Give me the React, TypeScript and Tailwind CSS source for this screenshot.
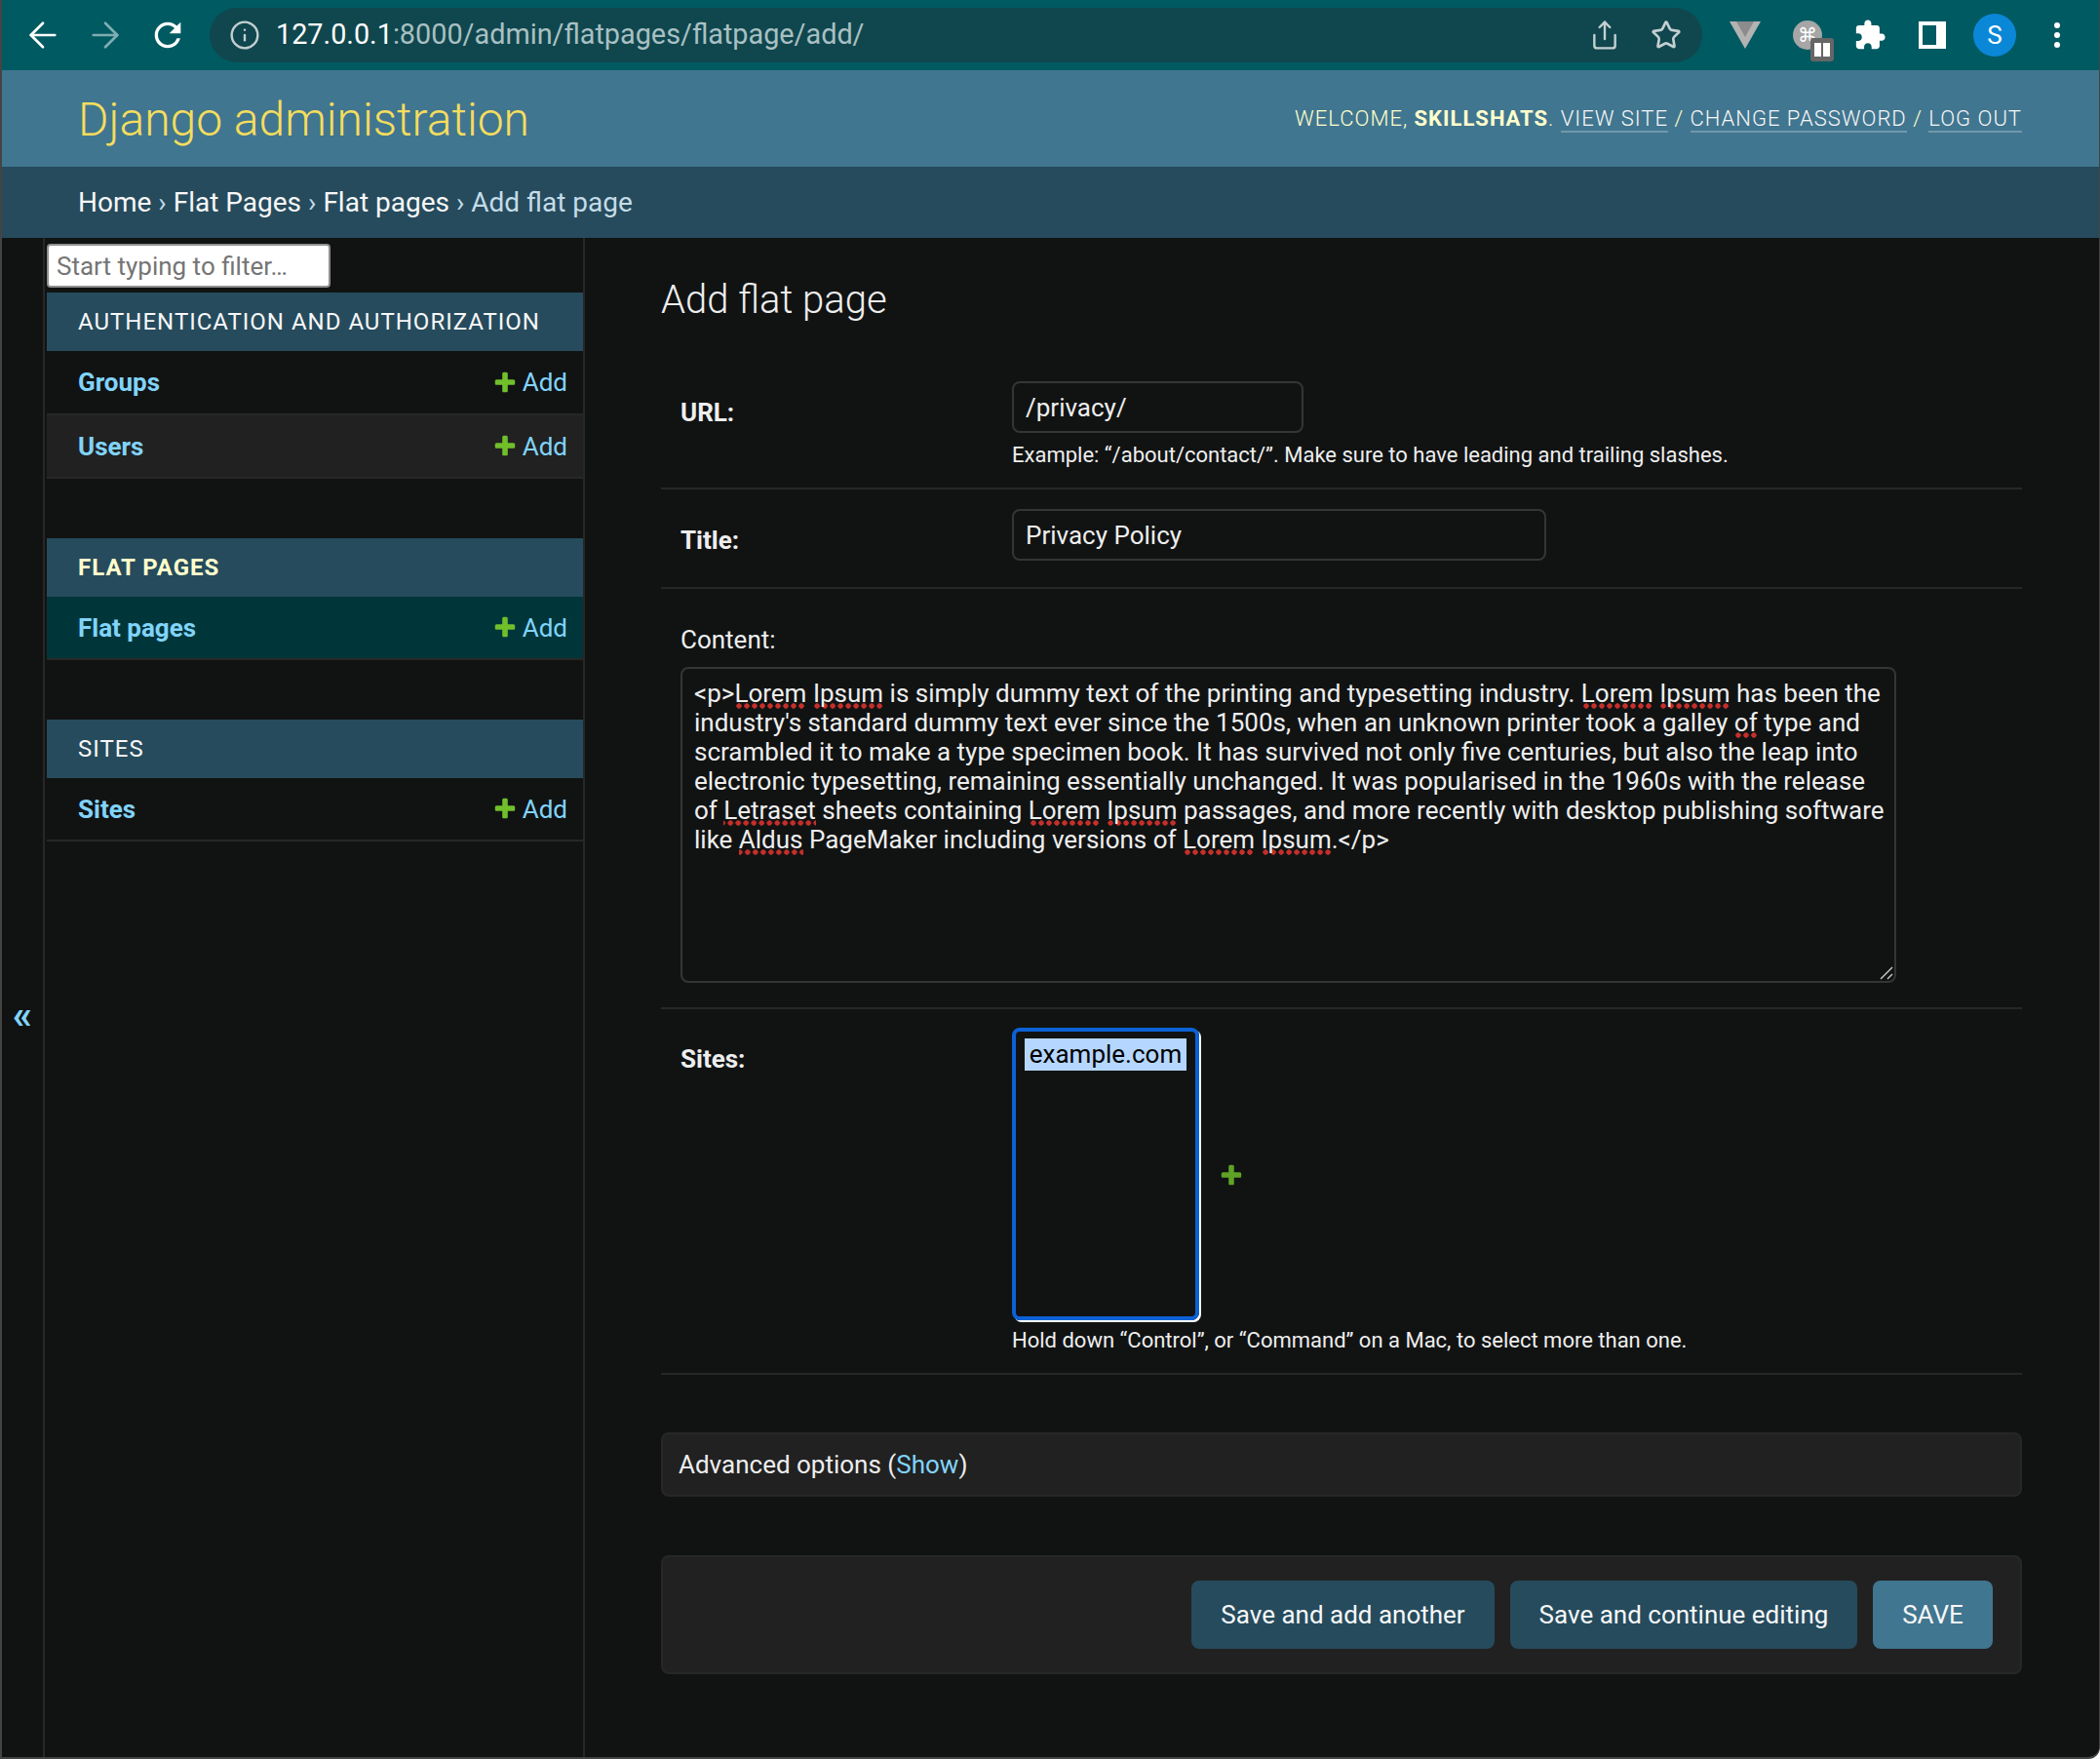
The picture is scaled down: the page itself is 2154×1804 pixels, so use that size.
import { ArrowLeft, ArrowRight, Info, Share, Star } from 'lucide-react';

const PLUS_PATH =
  'M1600 736v192q0 40-28 68t-68 28h-416v416q0 40-28 68t-68 28h-192q-40 0-68-28t-28-68v-416h-416q-40 0-68-28t-28-68v-192q0-40 28-68t68-28h416v-416q0-40 28-68t68-28h192q40 0 68 28t28 68v416h416q40 0 68 28t28 68z';

const sections = [
  { caption: 'Authentication and Authorization', active: false, rows: ['Groups', 'Users'] },
  { caption: 'Flat Pages', active: true, rows: ['Flat pages'] },
  { caption: 'Sites', active: false, rows: ['Sites'] },
];

const PlusIcon = ({ className }: { className: string }) => (
  <svg viewBox="0 0 1792 1792" className={className} fill="currentColor">
    <path d={PLUS_PATH} />
  </svg>
);

// spell checker squiggle under a word of the content box
const Misspelt = ({ children }: { children: string }) => (
  <span className="bg-[radial-gradient(circle,#c62f2a_2.4px,transparent_3px)] bg-[length:8px_6px] bg-bottom bg-repeat-x pb-[1px]">{children}</span>
);

const BrowserBar = () => (
  <div className="flex h-[72px] items-center bg-[#005a62] pl-[30px] text-white">
    <ArrowLeft className="-ml-[9px] h-[42px] w-[42px]" strokeWidth={1.55} />
    <ArrowRight className="ml-[22px] h-[42px] w-[42px] text-[#7fadb1]" strokeWidth={1.55} />
    <svg viewBox="0 0 24 24" className="ml-[23px] h-[40px] w-[40px]" fill="#ffffff">
      <path d="M17.65 6.35A7.958 7.958 0 0 0 12 4c-4.42 0-7.99 3.58-7.99 8s3.57 8 7.99 8c3.73 0 6.84-2.55 7.73-6h-2.08A5.99 5.99 0 0 1 12 18c-3.31 0-6-2.69-6-6s2.69-6 6-6c1.66 0 3.14.69 4.22 1.78L13 11h7V4l-2.35 2.35z" />
    </svg>
    <div className="ml-[23px] flex h-[56px] w-[1531px] items-center rounded-full bg-[#10474e] pl-[20px]">
      <Info className="h-[32px] w-[32px] text-[#c3cfd1]" strokeWidth={1.8} />
      <div className="ml-[16px] text-[28.8px] text-[#a9c0c3]">
        <span className="text-white">127.0.0.1</span>:8000/admin/flatpages/flatpage/add/
      </div>
      <Share className="ml-[743px] h-[32px] w-[32px] text-[#c3cfd1]" strokeWidth={1.8} />
      <Star className="ml-[31px] h-[32px] w-[32px] text-[#c3cfd1]" strokeWidth={2} />
    </div>
    <svg viewBox="0 0 32 28" className="ml-[28px] h-[28px] w-[32px]">
      <polygon points="0,0 32,0 16,28" fill="#b3b3b3" />
      <polygon points="7,0 25,0 16,16" fill="#8c8c8c" />
    </svg>
    <div className="relative ml-[33px] flex h-[30px] w-[30px] items-center justify-center rounded-full bg-[#a6a6a6] text-[20px] text-white font-['DejaVu_Sans',sans-serif]">
      ⌘
      <div className="absolute left-[18px] top-[18px] flex h-[24px] w-[24px] items-center justify-center gap-[2px] rounded-[3px] bg-[#666666]">
        <div className="h-[14px] w-[7px] bg-white" />
        <div className="h-[14px] w-[7px] bg-white" />
      </div>
    </div>
    <svg viewBox="0 0 24 24" className="ml-[32px] h-[34px] w-[34px]" fill="#ffffff">
      <path d="M20.5 11H19V7c0-1.1-.9-2-2-2h-4V3.5C13 2.12 11.88 1 10.5 1S8 2.12 8 3.5V5H4c-1.1 0-1.99.9-1.99 2v3.8H3.5c1.49 0 2.7 1.21 2.7 2.7s-1.21 2.7-2.7 2.7H2V20c0 1.1.9 2 2 2h3.8v-1.5c0-1.49 1.21-2.7 2.7-2.7 1.49 0 2.7 1.21 2.7 2.7V22H17c1.1 0 2-.9 2-2v-4h1.5c1.38 0 2.5-1.12 2.5-2.5S21.88 11 20.5 11z" />
    </svg>
    <div className="ml-[33px] h-[28px] w-[28px] border-[4px] border-r-[10px] border-white" />
    <div className="ml-[28px] flex h-[44px] w-[44px] items-center justify-center rounded-full bg-[#0b87d7] text-[26px]">S</div>
    <div className="ml-[39px] flex flex-col gap-[4px]">
      <div className="h-[6px] w-[6px] rounded-full bg-white" />
      <div className="h-[6px] w-[6px] rounded-full bg-white" />
      <div className="h-[6px] w-[6px] rounded-full bg-white" />
    </div>
  </div>
);

const Sidebar = () => (
  <div className="ml-[2px] w-[552px] border-r-2 border-[#272727] pt-[6px]">
    <input
      readOnly
      placeholder="Start typing to filter…"
      className="block h-[45px] w-[291px] rounded-[4px] border-2 border-[#8f8f8f] bg-white px-[8px] text-[26px] text-[#333] placeholder:text-[#757575] outline-none"
    />
    <div className="mt-[5px]">
      {sections.map((section) => (
        <div key={section.caption} className="mb-[60.5px]">
          <div
            className={`flex h-[60px] items-center bg-[#264b5d] pl-[32px] text-[24px] uppercase tracking-[1px] ${
              section.active ? 'font-bold text-[#ffffcc]' : 'text-[#f7f7f7]'
            }`}
          >
            {section.caption}
          </div>
          {section.rows.map((row) => (
            <div
              key={row}
              className={`flex h-[65.5px] items-center justify-between border-b-2 border-[#272727] pl-[32px] pr-[16px] pt-[2px] text-[26px] text-[#81d4fa] ${
                section.active ? 'bg-[#00363a]' : row === 'Users' ? 'bg-[#212121]' : ''
              }`}
            >
              <span className="font-bold">{row}</span>
              <span className="flex items-center gap-[5px]">
                <PlusIcon className="h-[26px] w-[26px] text-[#70bf2b]" />
                Add
              </span>
            </div>
          ))}
        </div>
      ))}
    </div>
  </div>
);

const ContentBox = () => (
  <div className="relative mt-[13px] h-[324px] w-[1247px] rounded-[8px] border-2 border-[#353535] px-[12px] pt-[10px] text-[26px] leading-[30px] text-[#eeeeee]">
    <div className="whitespace-nowrap">
      &lt;p&gt;<Misspelt>Lorem</Misspelt> <Misspelt>Ipsum</Misspelt> is simply dummy text of the printing and typesetting industry. <Misspelt>Lorem</Misspelt> <Misspelt>Ipsum</Misspelt> has been the
    </div>
    <div className="whitespace-nowrap">
      industry's standard dummy text ever since the 1500s, when an unknown printer took a galley <Misspelt>of</Misspelt> type and
    </div>
    <div className="whitespace-nowrap">
      scrambled it to make a type specimen book. It has survived not only five centuries, but also the leap into
    </div>
    <div className="whitespace-nowrap">
      electronic typesetting, remaining essentially unchanged. It was popularised in the 1960s with the release
    </div>
    <div className="whitespace-nowrap">
      of <Misspelt>Letraset</Misspelt> sheets containing <Misspelt>Lorem</Misspelt> <Misspelt>Ipsum</Misspelt> passages, and more recently with desktop publishing software
    </div>
    <div className="whitespace-nowrap">
      like <Misspelt>Aldus</Misspelt> PageMaker including versions of <Misspelt>Lorem</Misspelt> <Misspelt>Ipsum</Misspelt>.&lt;/p&gt;
    </div>
    <svg viewBox="0 0 14 14" className="absolute bottom-[1px] right-[1px] h-[14px] w-[14px]" stroke="#c8c8c8" strokeWidth="1.4">
      <line x1="1" y1="13" x2="13" y2="1" />
      <line x1="8" y1="13" x2="13" y2="8" />
    </svg>
  </div>
);

const MainForm = () => (
  <div className="flex-1 pl-[78px] pr-[79px] pt-[40px] text-[#eeeeee]">
    <h1 className="mb-[39px] text-[40px] font-light leading-[48px] text-[#eeeeee]">Add flat page</h1>

    {/* URL */}
    <div className="flex border-b-2 border-[#272727] px-[20px] pb-[18px] pt-[20px]">
      <label className="w-[340px] shrink-0 pt-[17px] text-[26px] font-bold leading-[30px]">URL:</label>
      <div>
        <input
          readOnly
          value="/privacy/"
          className="block h-[53px] w-[299px] rounded-[8px] border-2 border-[#353535] bg-transparent px-[12px] text-[26px] text-[#eeeeee] outline-none"
        />
        <div className="mt-[8px] text-[22px] leading-[30px]">
          Example: “/about/contact/”. Make sure to have leading and trailing slashes.
        </div>
      </div>
    </div>

    {/* Title */}
    <div className="flex border-b-2 border-[#272727] px-[20px] py-[20px] pb-[27px]">
      <label className="w-[340px] shrink-0 pt-[17px] text-[26px] font-bold leading-[30px]">Title:</label>
      <input
        readOnly
        value="Privacy Policy"
        className="block h-[53px] w-[548px] rounded-[8px] border-2 border-[#353535] bg-transparent px-[12px] text-[26px] text-[#eeeeee] outline-none"
      />
    </div>

    {/* Content */}
    <div className="border-b-2 border-[#272727] px-[20px] pb-[25px] pt-[37px]">
      <label className="block text-[26px] leading-[30px]">Content:</label>
      <ContentBox />
    </div>

    {/* Sites */}
    <div className="flex border-b-2 border-[#272727] px-[20px] pb-[18px] pt-[19px]">
      <label className="w-[340px] shrink-0 pt-[17px] text-[26px] font-bold leading-[30px]">Sites:</label>
      <div>
        <div className="flex items-center">
          <div className="h-[300px] w-[192px] rounded-[8px] border-[4px] border-[#0b62d6] px-[9px] pt-[7px] shadow-[2px_2px_0_0_#ffffff]">
            <div className="flex h-[33px] items-center justify-center bg-[#b5d7ff] text-[26px] text-black">example.com</div>
          </div>
          <PlusIcon className="ml-[20px] mt-[4px] h-[26px] w-[26px] text-[#5fa225]" />
        </div>
        <div className="mt-[6px] text-[22px] leading-[30px]">
          Hold down “Control”, or “Command” on a Mac, to select more than one.
        </div>
      </div>
    </div>

    {/* Advanced options */}
    <div className="mt-[59px] flex h-[66px] items-center rounded-[8px] border-2 border-[#272727] bg-[#212121] pl-[16px] text-[26px]">
      Advanced options (<span className="text-[#81d4fa]">Show</span>)
    </div>

    {/* Submit row */}
    <div className="mt-[60px] flex h-[122px] items-center justify-end gap-[16px] rounded-[8px] border-2 border-[#272727] bg-[#212121] pr-[28px] text-[26px] text-[#f7f7f7]">
      <button className="h-[70px] w-[311px] rounded-[8px] bg-[#264b5d]">Save and add another</button>
      <button className="h-[70px] w-[356px] rounded-[8px] bg-[#264b5d]">Save and continue editing</button>
      <button className="h-[70px] w-[123px] rounded-[8px] bg-[#417690]">SAVE</button>
    </div>
  </div>
);

const App = () => (
  <div className="flex h-[1804px] w-[2154px] flex-col overflow-hidden rounded-br-[12px] border-b-2 border-l-2 border-r border-[#444444] bg-[#111313] font-['Roboto',sans-serif]">
    <BrowserBar />

    {/* Site header */}
    <div className="flex h-[99px] items-center justify-between bg-[#417690] pl-[78px] pr-[79px]">
      <div className="pt-[2px] text-[48px] font-light text-[#f5dd5d]">Django administration</div>
      <div className="text-[22px] font-light uppercase tracking-[1px] text-[#ffffcc]">
        Welcome, <strong className="font-bold">skillshats</strong>.{' '}
        <span className="border-b-2 border-[#ffffff40] text-[#f7f7f7]">View site</span> /{' '}
        <span className="border-b-2 border-[#ffffff40] text-[#f7f7f7]">Change password</span> /{' '}
        <span className="border-b-2 border-[#ffffff40] text-[#f7f7f7]">Log out</span>
      </div>
    </div>

    {/* Breadcrumbs */}
    <div className="flex h-[73px] items-center bg-[#264b5d] pl-[78px] text-[28px] text-[#c4dce8]">
      <span className="text-[#f7f7f7]">Home</span>&nbsp;›&nbsp;
      <span className="text-[#f7f7f7]">Flat Pages</span>&nbsp;›&nbsp;
      <span className="text-[#f7f7f7]">Flat pages</span>&nbsp;›&nbsp;Add flat page
    </div>

    <div className="flex flex-1">
      <div className="flex w-[44px] shrink-0 items-center justify-center border-r-2 border-[#272727] pt-[38px] text-[40px] font-bold text-[#81d4fa]">
        «
      </div>
      <Sidebar />
      <MainForm />
    </div>
  </div>
);

export default App;
